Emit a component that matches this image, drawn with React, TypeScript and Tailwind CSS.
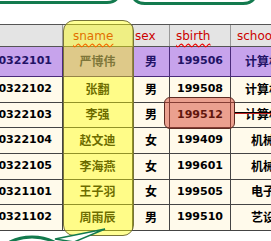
type Row = {
  sno: string
  name: string
  sex: string
  birth: string
  school: string
  h: string
}

const rows: Row[] = [
  { sno: "0322101", name: "严博伟", sex: "男", birth: "199506", school: "计算机系", h: "h-[30px]" },
  { sno: "0322102", name: "张翻", sex: "男", birth: "199508", school: "计算机系", h: "h-[26px]" },
  { sno: "0322103", name: "李强", sex: "男", birth: "199512", school: "计算机系", h: "h-[25px]" },
  { sno: "0322104", name: "赵文迪", sex: "女", birth: "199409", school: "机械系", h: "h-[26px]" },
  { sno: "0322105", name: "李海燕", sex: "女", birth: "199601", school: "机械系", h: "h-[26px]" },
  { sno: "0321101", name: "王子羽", sex: "女", birth: "199505", school: "电子系", h: "h-[25px]" },
  { sno: "0321102", name: "周雨辰", sex: "男", birth: "199510", school: "艺设系", h: "h-[26px]" },
]

const cols = "grid grid-cols-[63px_70px_37px_61px_76px] w-[307px]"

export default function App() {
  return (
    <div className="relative w-[271px] h-[241px] overflow-hidden bg-white font-['DejaVu_Sans','Noto_Sans_CJK_SC',sans-serif]">
      {/* callouts above */}
      <svg className="absolute left-0 top-0" width="271" height="10">
        <path d="M -5 2.5 H 107 Q 115 2.5 118 -3" fill="none" stroke="#137a4e" strokeWidth="3" />
        <path d="M 133 -3 Q 136 3.5 145 3.5 H 243 Q 252 3.5 255 -3" fill="none" stroke="#137a4e" strokeWidth="3" />
      </svg>

      {/* table */}
      <div className="pt-[24px]">
        <div className={`${cols} h-[23px] bg-[#e4e4e4] border-t border-b border-[#555] text-[12px] text-[#cc0000]`}>
          <div className="border-r border-[#999]" />
          <div className="border-r border-[#999] pl-[10px] flex items-center">
            <span className="underline decoration-wavy decoration-[#e00] underline-offset-[3px]">sname</span>
          </div>
          <div className="border-r border-[#999] pl-[2px] flex items-center">sex</div>
          <div className="border-r border-[#999] pl-[6px] flex items-center">
            <span className="underline decoration-wavy decoration-[#e00] underline-offset-[3px]">sbirth</span>
          </div>
          <div className="pl-[6px] flex items-center">school</div>
        </div>

        {rows.map((r, i) => {
          const purple = i === 0
          const line = purple ? "border-[#4a2a7a]" : "border-[#444]"
          return (
            <div
              key={r.sno}
              className={`${cols} ${r.h} border-b ${line} font-bold ${
                purple ? "bg-[#c7a3ec] text-[#221266]" : "bg-[#fffaeb] text-black"
              }`}
            >
              <div className={`border-r ${line} flex items-center justify-end pr-[10px] text-[11px]`}>{r.sno}</div>
              <div className={`border-r ${line} flex items-center justify-center text-[12px]`}>{r.name}</div>
              <div className={`border-r ${line} flex items-center justify-center text-[12px]`}>{r.sex}</div>
              <div className={`border-r ${line} flex items-center justify-center text-[11px]`}>{r.birth}</div>
              <div className="flex items-center justify-center text-[12px]">{r.school}</div>
            </div>
          )
        })}
      </div>

      {/* yellow highlight over sname */}
      <div className="absolute left-[63px] top-[20px] w-[71px] h-[216px] rounded-[11px] bg-[rgba(255,255,0,0.42)] border-[1.5px] border-[#77733a]" />

      {/* red highlight over 199512 */}
      <div className="absolute left-[164px] top-[97px] w-[71px] h-[32px] rounded-[6px] bg-[rgba(210,50,30,0.45)] border-[1.5px] border-[#5e2c22]" />
      <div className="absolute left-[235px] top-[112px] w-[40px] h-[2px] border-t border-black border-b border-b-[#c02020]" />

      {/* callout below */}
      <svg className="absolute left-0 top-[220px]" width="271" height="21">
        <ellipse cx="32" cy="33" rx="30" ry="16" fill="white" stroke="#137a4e" strokeWidth="3" />
        <polygon points="55,19 105,9 74,22" fill="white" stroke="#137a4e" strokeWidth="1.5" />
      </svg>
    </div>
  )
}
